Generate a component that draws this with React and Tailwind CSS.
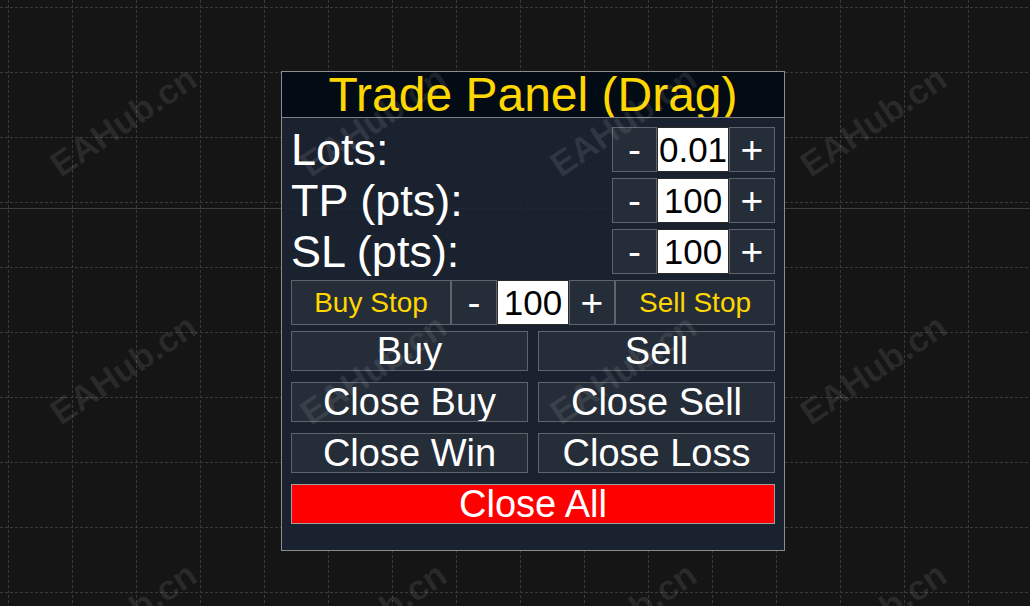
import React from "react";

const VX = Array.from({ length: 17 }, (_, i) => 8.5 + 64 * i);
const HY = Array.from({ length: 10 }, (_, i) => 7.5 + 65 * i);
const WM = [];
for (const cy of [121, 369, 617]) for (const cx of [123, 373, 623, 873]) WM.push([cx, cy]);

function Btn({ children, className = "", yellow = false }) {
  return (
    <div
      className={
        "flex items-center justify-center leading-none border border-[#5f646b] bg-[#252d38] whitespace-nowrap overflow-hidden " +
        (yellow ? "text-[#ffd700] " : "text-white ") +
        className
      }
    >
      {children}
    </div>
  );
}

function Field({ value, className = "" }) {
  return (
    <div
      className={
        "flex items-center justify-center leading-none bg-white border border-[#2a2a2a] text-black text-[35px] overflow-hidden whitespace-nowrap " +
        className
      }
    >
      {value}
    </div>
  );
}

function Stepper({ value }) {
  return (
    <div className="flex h-[45px]">
      <Btn className="w-[45px] h-[45px] text-[39px]">-</Btn>
      <Field value={value} className="w-[72px] h-[45px]" />
      <Btn className="w-[46px] h-[45px] text-[39px]">+</Btn>
    </div>
  );
}

function LabelRow({ label, value }) {
  return (
    <div className="flex h-[45px] items-center justify-between">
      <span className="text-[45px] leading-none text-white whitespace-nowrap">{label}</span>
      <Stepper value={value} />
    </div>
  );
}

export default function App() {
  return (
    <div className="relative w-[1030px] h-[606px] overflow-hidden bg-[#151515] font-['Liberation_Sans',Arial,sans-serif]">
      <svg className="absolute inset-0" width="1030" height="606" viewBox="0 0 1030 606">
        {VX.map((x) => (
          <line key={"v" + x} x1={x} y1="0" x2={x} y2="606" stroke="#3a3a3a" strokeWidth="1" strokeDasharray="3 2" />
        ))}
        {HY.map((y) => (
          <line key={"h" + y} x1="0" y1={y} x2="1030" y2={y} stroke="#3a3a3a" strokeWidth="1" strokeDasharray="3 2" />
        ))}
        <line x1="0" y1="208.5" x2="1030" y2="208.5" stroke="#3d3d3d" strokeWidth="1" />
      </svg>

      <div className="absolute left-[281px] top-[71px] w-[504px] h-[480px] border border-[#8c8c8c] flex flex-col">
        <div className="h-[46px] shrink-0 bg-[#030c15] border-b border-[#7c8088] flex items-center justify-center overflow-hidden">
          <span className="text-[48px] leading-none text-[#ffd700] whitespace-nowrap">Trade Panel (Drag)</span>
        </div>
        <div className="flex-1 bg-[#1c2432]/90 px-[9px] pt-[9px] flex flex-col gap-[6px]">
          <LabelRow label="Lots:" value="0.01" />
          <LabelRow label="TP (pts):" value="100" />
          <LabelRow label="SL (pts):" value="100" />
          <div className="flex h-[45px]">
            <Btn yellow className="w-[160px] h-[45px] text-[28px]">Buy Stop</Btn>
            <Btn className="w-[46px] h-[45px] text-[39px]">-</Btn>
            <Field value="100" className="w-[72px] h-[45px]" />
            <Btn className="w-[46px] h-[45px] text-[39px]">+</Btn>
            <Btn yellow className="w-[160px] h-[45px] text-[28px]">Sell Stop</Btn>
          </div>
          <div className="h-[45px] grid grid-cols-2 gap-[10px] items-start">
            <Btn className="h-[40px] text-[38px]">Buy</Btn>
            <Btn className="h-[40px] text-[38px]">Sell</Btn>
          </div>
          <div className="h-[45px] grid grid-cols-2 gap-[10px] items-start">
            <Btn className="h-[40px] text-[38px]">Close Buy</Btn>
            <Btn className="h-[40px] text-[38px]">Close Sell</Btn>
          </div>
          <div className="h-[45px] grid grid-cols-2 gap-[10px] items-start">
            <Btn className="h-[40px] text-[38px]">Close Win</Btn>
            <Btn className="h-[40px] text-[38px]">Close Loss</Btn>
          </div>
          <div className="h-[45px]">
            <div className="h-[40px] flex items-center justify-center leading-none bg-[#ff0000] border border-[#a0a0a0] text-white text-[38px]">
              Close All
            </div>
          </div>
        </div>
      </div>

      {WM.map(([cx, cy]) => (
        <div
          key={cx + "-" + cy}
          className="absolute pointer-events-none -translate-x-1/2 -translate-y-1/2 -rotate-[34deg] text-[35px] leading-none font-bold text-white/[0.09] whitespace-nowrap"
          style={{ left: cx, top: cy }}
        >
          EAHub.cn
        </div>
      ))}
    </div>
  );
}
